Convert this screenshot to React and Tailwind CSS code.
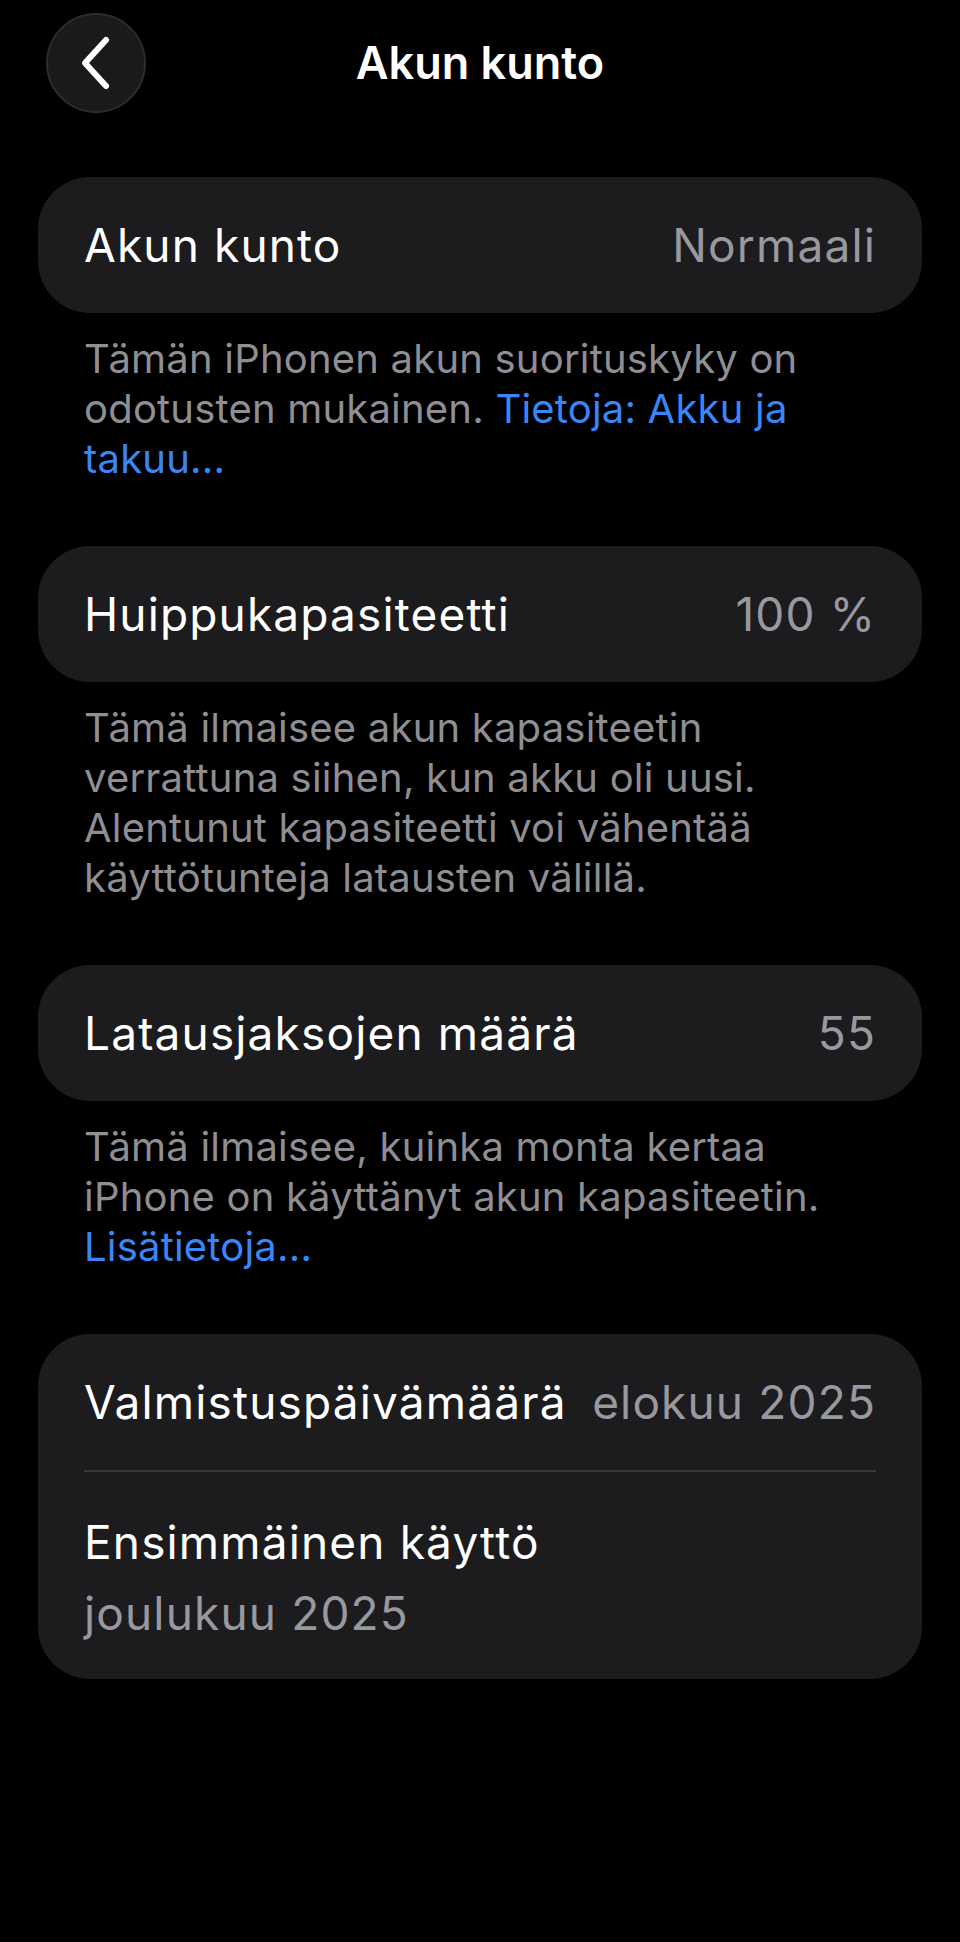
export default function App() {
  return (
    <main className="min-h-[1942px] w-full bg-black text-white font-['Inter',sans-serif]">
      <header className="grid h-[126px] grid-cols-[1fr_auto_1fr] items-center">
        <div className="pl-[46px]">
          <button className="flex h-[100px] w-[100px] items-center justify-center rounded-full border-2 border-[#2c2c2e] bg-[#1a1a1b]">
            <svg width="40" height="56" viewBox="0 0 40 56" fill="none">
              <path
                d="M30 5 L9 28 L30 51"
                stroke="white"
                strokeWidth="6"
                strokeLinecap="round"
                strokeLinejoin="round"
              />
            </svg>
          </button>
        </div>
        <h1 className="text-[45px] font-semibold leading-[56px]">Akun kunto</h1>
        <div />
      </header>

      <section className="mt-[51px] px-[38px]">
        <Row label="Akun kunto" value="Normaali" />
        <Note>
          Tämän iPhonen akun suorituskyky on odotusten mukainen.{" "}
          <span className="text-[#3b86f7]">Tietoja: Akku ja takuu...</span>
        </Note>

        <Row label="Huippukapasiteetti" value="100 %" />
        <Note>
          Tämä ilmaisee akun kapasiteetin verrattuna siihen, kun akku oli uusi.
          Alentunut kapasiteetti voi vähentää käyttötunteja latausten välillä.
        </Note>

        <Row label="Latausjaksojen määrä" value="55" />
        <Note>
          Tämä ilmaisee, kuinka monta kertaa iPhone on käyttänyt akun kapasiteetin.{" "}
          <span className="text-[#3b86f7]">Lisätietoja...</span>
        </Note>

        <div className="rounded-[52px] bg-[#1c1c1e] px-[46px]">
          <div className="flex h-[136px] items-center justify-between gap-2 whitespace-nowrap text-[46px] leading-[56px] tracking-[0.025em]">
            <span>Valmistuspäivämäärä</span>
            <span className="text-[#98989f]">elokuu 2025</span>
          </div>
          <div className="h-[2px] bg-[#38383a]" />
          <div className="pb-[38px] pt-[42px] text-[46px] leading-[56px] tracking-[0.025em]">
            <div>Ensimmäinen käyttö</div>
            <div className="mt-[15px] text-[#98989f]">joulukuu 2025</div>
          </div>
        </div>
      </section>
    </main>
  );
}

function Row({ label, value }) {
  return (
    <div className="flex h-[136px] items-center justify-between rounded-[52px] bg-[#1c1c1e] px-[46px] text-[46px] leading-[56px] tracking-[0.025em]">
      <span>{label}</span>
      <span className="text-[#98989f]">{value}</span>
    </div>
  );
}

function Note({ children }) {
  return (
    <p className="px-[46px] pb-[62px] pt-[21px] text-[40px] leading-[50px] tracking-[0.005em] text-[#8e8e93]">
      {children}
    </p>
  );
}
